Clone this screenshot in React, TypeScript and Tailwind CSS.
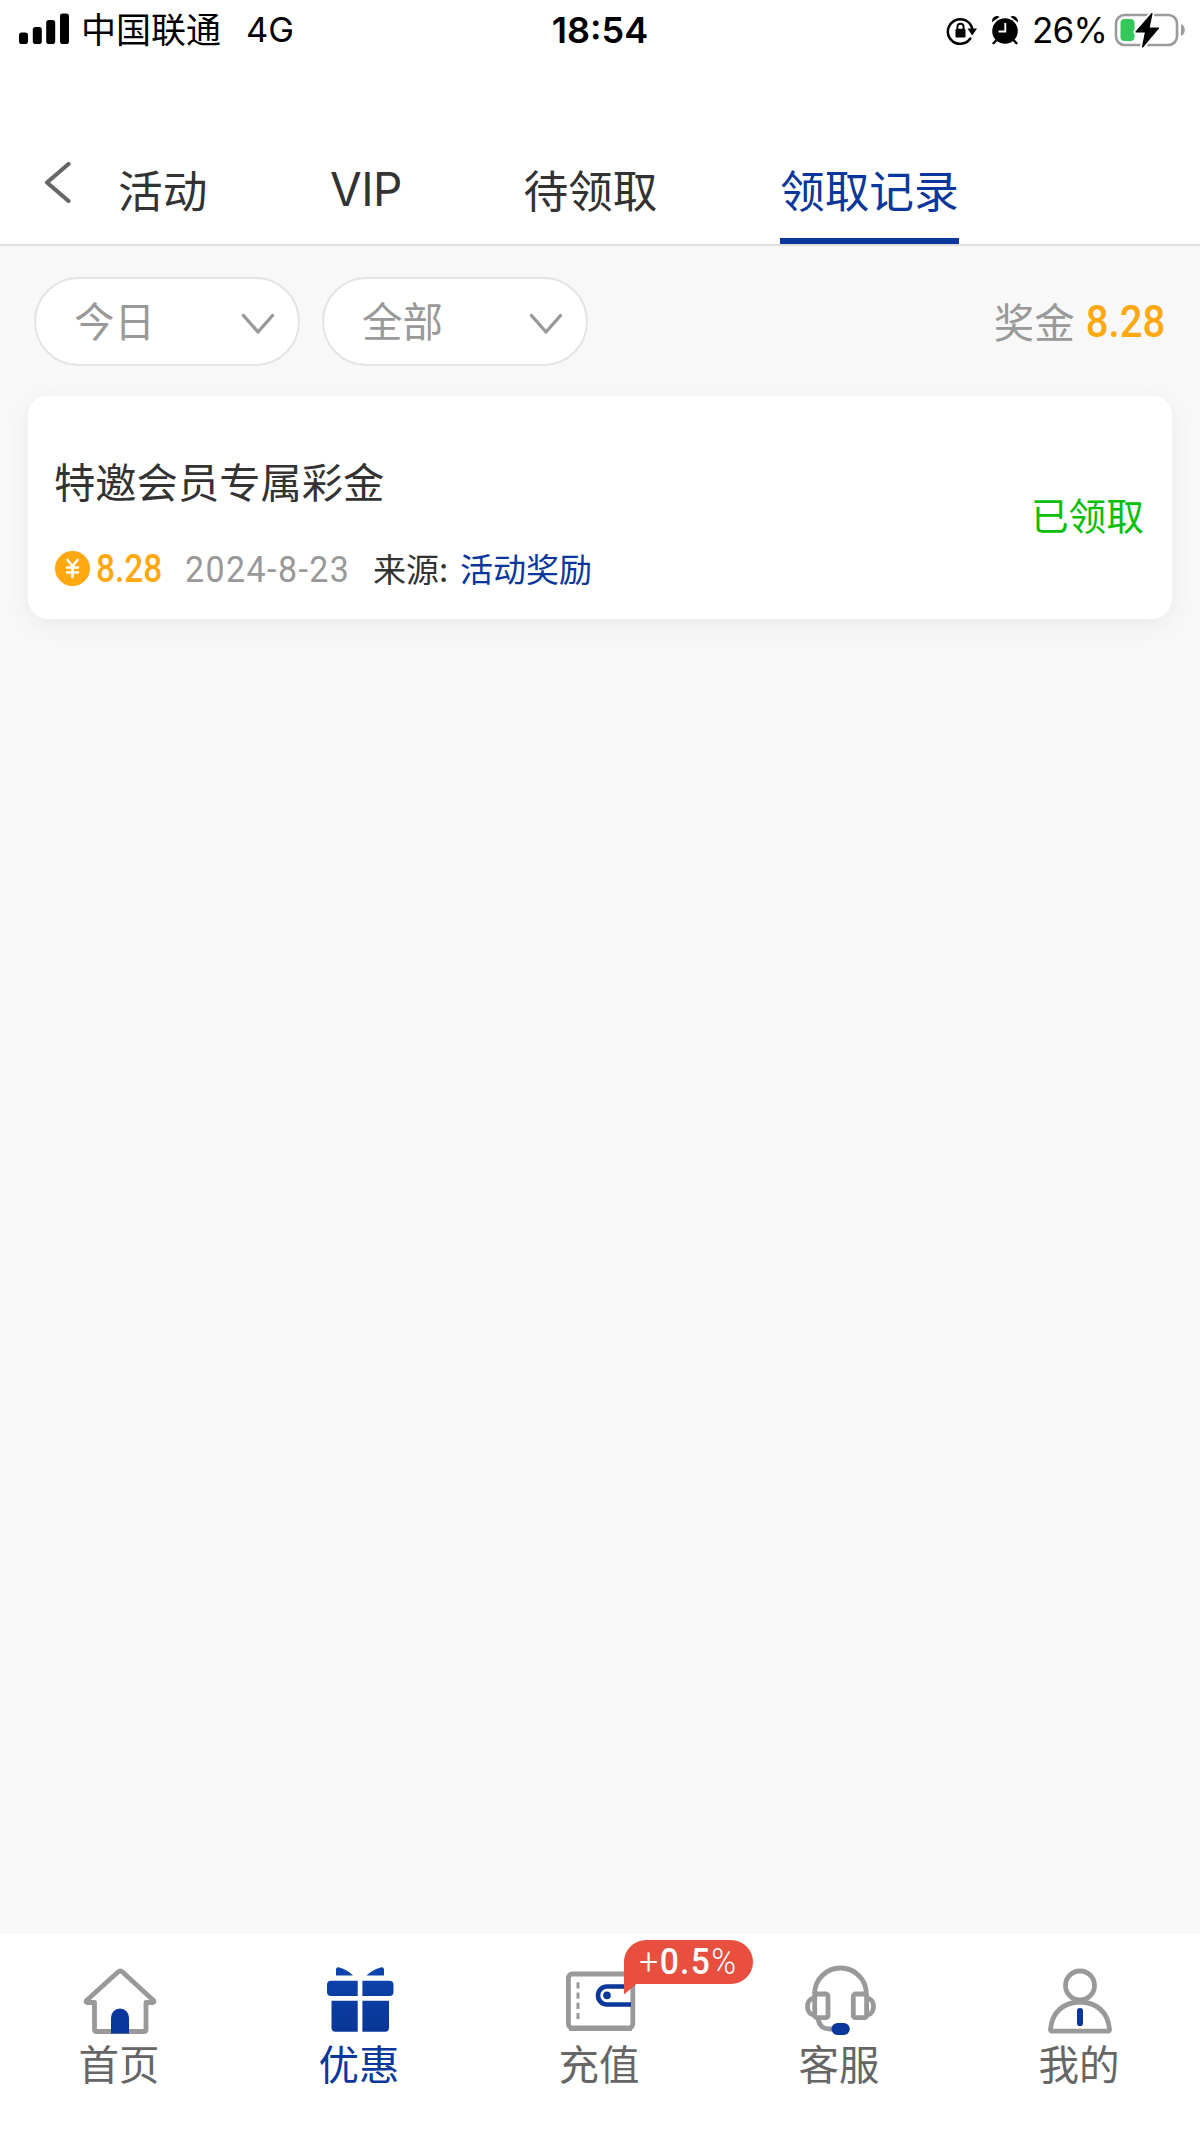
import type { ReactNode } from 'react'

const tabs = [
  { label: '活动', active: false },
  { label: 'VIP', active: false },
  { label: '待领取', active: false },
  { label: '领取记录', active: true },
]

function StatusBar() {
  return (
    <div className="grid h-[60px] grid-cols-3 items-center pt-px font-['Inter','Noto_Sans_CJK_SC',sans-serif] text-[36px] leading-none text-black">
      <div className="flex items-center pl-[19px]">
        <svg width="50" height="32" viewBox="0 0 50 32" className="mt-[-3px] mr-[12px]">
          <rect x="0" y="19.5" width="9" height="11.5" rx="2.8" />
          <rect x="13.8" y="14" width="9" height="17" rx="2.8" />
          <rect x="27.2" y="7" width="9" height="24" rx="2.8" />
          <rect x="41" y="0.5" width="9" height="30.5" rx="2.8" />
        </svg>
        <span className="text-[35px]">中国联通</span>
        <span className="ml-[25px] text-[34.5px]">4G</span>
      </div>
      <div className="-mt-px text-center font-semibold">18:54</div>
      <div className="flex items-center justify-end pr-[14px]">
        <svg width="34" height="32" viewBox="0 0 34 32" className="mr-[12px]" fill="none">
          <path d="M25.3 23.5a12.300 12.300 0 1 1 1.900-9.500" stroke="#000" strokeWidth="2.500" strokeLinecap="round" />
          <path d="M22.500 13.500h9.500l-4.800 7z" fill="#000" />
          <rect x="10.500" y="13.800" width="10" height="8.800" rx="1.400" fill="#000" />
          <path d="M12.400 14.500v-2.600a3.100 3.100 0 0 1 6.200 0v2.600" stroke="#000" strokeWidth="1.900" />
        </svg>
        <svg width="28" height="32" viewBox="0 0 28 32" className="mt-[-2px] mr-[13px]" fill="none">
          <circle cx="14" cy="17" r="12.800" fill="#000" />
          <path d="M1.200 8.200a5 5 0 0 1 7.400-5.400z" fill="#000" />
          <path d="M26.800 8.200a5 5 0 0 0-7.400-5.400z" fill="#000" />
          <path d="M5.500 26l-3 3.200M22.500 26l3 3.200" stroke="#000" strokeWidth="2.400" strokeLinecap="round" />
          <path d="M14.300 9v8.500H7.500" stroke="#fff" strokeWidth="1.900" />
        </svg>
        <span className="text-[35px] tracking-[-0.8px]">26%</span>
        <svg width="72" height="36" viewBox="0 0 72 36" className="mt-[-2px] ml-[7px]" fill="none">
          <rect x="2" y="3" width="61" height="30" rx="8.500" stroke="#9b9b9b" strokeWidth="2.600" />
          <path d="M67 12v12c5-1.600 5-10.400 0-12z" fill="#9b9b9b" />
          <rect x="6.500" y="7" width="14" height="22" rx="4" fill="#34c759" />
          <path d="M38 1.500 22 20h9.500L28.500 35 44.500 16H35z" fill="#fff" stroke="#fff" strokeWidth="5" strokeLinejoin="round" />
          <path d="M38 1.500 22 20h9.500L28.500 35 44.500 16H35z" fill="#000" stroke="#000" strokeWidth="1.200" strokeLinejoin="round" />
        </svg>
      </div>
    </div>
  )
}

function Header() {
  return (
    <div className="flex h-[186px] items-stretch border-b-2 border-[#dfdfdf] pl-[44px]">
      <svg width="28" height="42" viewBox="0 0 28 42" fill="none" className="mt-[101px] mr-[46px]">
        <path d="M24.500 3 3 21.500l21.500 18.500" stroke="#666" strokeWidth="4.200" strokeLinecap="round" strokeLinejoin="round" />
      </svg>
      <div className="flex gap-[122.500px] text-[44.700px] leading-[60px] text-[#333]">
        {tabs.map((tab) => (
          <div
            key={tab.label}
            className={
              tab.active
                ? 'border-b-6 border-[#0a379b] pt-[99px] text-[#0a379b]'
                : tab.label === 'VIP'
                  ? "w-[71px] pt-[99px] font-['Inter',sans-serif] text-[46px] tracking-[-0.5px] whitespace-nowrap"
                  : 'pt-[99px]'
            }
          >
            {tab.label}
          </div>
        ))}
      </div>
    </div>
  )
}

function Select({ label }: { label: string }) {
  return (
    <div className="flex h-[89px] w-[266px] items-center justify-between rounded-full border-2 border-[#e4e4e4] bg-white pr-[23px] pl-[38px] text-[40.5px] text-[#999]">
      <span className="-mt-0.5">{label}</span>
      <svg width="34" height="22" viewBox="0 0 34 22" fill="none" className="mt-[4px]">
        <path d="M2.500 2.500 17 19 31.500 2.500" stroke="#999" strokeWidth="3.400" strokeLinecap="round" strokeLinejoin="round" />
      </svg>
    </div>
  )
}

function RecordCard() {
  return (
    <div className="mx-[28px] mt-[30px] flex h-[223px] items-center justify-between rounded-[20px] bg-white pr-[28px] pl-[26px] shadow-[0_6px_22px_rgba(60,80,90,0.08)]">
      <div className="pt-[26px]">
        <div className="text-[41.3px] leading-[60px] text-[#333]">特邀会员专属彩金</div>
        <div className="mt-[34px] flex h-[48px] items-center text-[33px] leading-[48px] whitespace-nowrap">
          <svg width="35" height="35" viewBox="0 0 35 35" fill="none" className="mt-[2px] ml-px">
            <circle cx="17.500" cy="17.500" r="17.500" fill="#ffa810" />
            <path
              d="M12.500 9l5 6 5-6M12 16.500h11M12 21.500h11M17.500 15.500v10.500"
              stroke="#fff"
              strokeWidth="2.600"
              strokeLinecap="round"
            />
          </svg>
          <div className="mt-[3px] ml-[6px] w-[89px] font-['Roboto',sans-serif] text-[38px] font-medium text-[#ffa810]">
            <span className="inline-block origin-left scale-x-[0.88]">8.28</span>
          </div>
          <div className="mt-[3px] w-[188px] font-['Roboto',sans-serif] text-[37.500px] tracking-[1.600px] text-[#999]">
            <span className="inline-block origin-left scale-x-[0.905]">2024-8-23</span>
          </div>
          <span className="w-[87px] text-[#333]">来源:</span>
          <span className="text-[#0a379b]">活动奖励</span>
        </div>
      </div>
      <div className="mt-[13px] text-[37.700px] text-[#0abf0a]">已领取</div>
    </div>
  )
}

function NavItem({ label, active, children }: { label: string; active?: boolean; children: ReactNode }) {
  return (
    <div className="relative flex flex-1 flex-col items-center pt-[26px]">
      <svg width="80" height="80" viewBox="0 0 80 80" fill="none" stroke="#999" strokeWidth="4.8">
        {children}
      </svg>
      <span
        className={
          active
            ? '-mt-[2px] mr-[2px] text-[40.5px] leading-[50px] text-[#0a379b]'
            : '-mt-[2px] mr-[2px] text-[40.5px] leading-[50px] text-[#666]'
        }
      >
        {label}
      </span>
      {label === '充值' && (
        <div className="absolute top-[6px] left-[144px] flex h-[44px] w-[129px] items-center justify-center rounded-[22px] rounded-bl-none bg-[#e94f3f] font-['Roboto',sans-serif] text-[36.5px] leading-none text-white">
          <svg width="14" height="12" viewBox="0 0 14 12" className="absolute top-[43px] left-0">
            <path d="M0 0h13.500L0 11.500z" fill="#e94f3f" />
          </svg>
          <span className="inline-block scale-x-[0.92] tracking-[1.500px]">
            <span className="font-light">+</span>
            <span className="font-medium">0.5</span>
            <span className="font-light">%</span>
          </span>
        </div>
      )}
    </div>
  )
}

function BottomNav() {
  return (
    <div className="flex h-[200px] bg-white">
      <NavItem label="首页">
        <path
          d="M38 12 6.500 40.500q-1.500 2 1 2H14.500V69.500q0 2 2 2H64q2 0 2-2V42.500h6.500q2.500 0 1-2L42.500 12q-2.250-2-4.500 0z"
          strokeLinejoin="round"
        />
        <path d="M31 73.500V57.500a9 9 0 0 1 18 0v16z" fill="#0a379b" stroke="none" />
      </NavItem>
      <NavItem label="优惠" active>
        <defs>
          <linearGradient id="gift" x1="0" y1="8" x2="0" y2="72" gradientUnits="userSpaceOnUse">
            <stop stopColor="#0d45ad" />
            <stop offset="1" stopColor="#093597" />
          </linearGradient>
        </defs>
        <g fill="url(#gift)" stroke="none">
          <path d="M16 15.500V10q0-3.500 3.500-2.500Q27 9.500 33 15.500z" />
          <path d="M64 15.500V10q0-3.500-3.500-2.500Q53 9.500 46.500 15.500z" />
          <path d="M37.700 20.700V36H11a4 4 0 0 1-4-4v-7.300a4 4 0 0 1 4-4z" />
          <path d="M42.400 20.700V36h27.100a4 4 0 0 0 4-4v-7.300a4 4 0 0 0-4-4z" />
          <path d="M37.700 40.700v31H15.500a4 4 0 0 1-4-4v-27z" />
          <path d="M42.400 40.700v31H65a4 4 0 0 0 4-4v-27z" />
        </g>
      </NavItem>
      <NavItem label="充值">
        <rect x="8.400" y="14" width="64.400" height="54" rx="4" />
        <path d="M9 68.600h63" />
        <path d="M18 22.300v37" strokeWidth="3" strokeDasharray="6.200 4" />
        <path d="M71 26.500H47a9 9 0 0 0 0 18h24" stroke="#0a379b" strokeWidth="4.600" />
        <circle cx="47" cy="35.400" r="3.800" fill="#0a379b" stroke="none" />
      </NavItem>
      <NavItem label="客服">
        <path d="M14.700 36V33.500a25.800 25.500 0 0 1 51.600 0V36" />
        <rect x="14.700" y="34" width="13.300" height="23.700" rx="2.200" />
        <rect x="53.300" y="34" width="13.300" height="23.700" rx="2.200" />
        <path d="M13.500 38c-8 1.500-8 15.500 0 17M67.500 38c8 1.500 8 15.500 0 17" />
        <path d="M18 58.500q1.500 10.500 12 10.500h3" />
        <rect x="31.500" y="63" width="18.300" height="12" rx="6" fill="#0a379b" stroke="none" />
      </NavItem>
      <NavItem label="我的">
        <circle cx="40" cy="25.500" r="14.500" />
        <path d="M12.500 71.200q-2 0-2-2C12 52 24 42 40 42s28 10 29.500 27.200q0 2-2 2z" strokeLinejoin="round" />
        <rect x="37" y="48" width="6" height="18" rx="2.800" fill="#0a379b" stroke="none" />
      </NavItem>
    </div>
  )
}

export default function App() {
  return (
    <div className="flex h-[2134px] w-[1200px] flex-col overflow-hidden bg-[#f8f8f8] font-['Noto_Sans_CJK_SC',sans-serif] font-normal">
      <div className="bg-white">
        <StatusBar />
        <Header />
      </div>
      <div className="flex-1">
        <div className="flex items-center pt-[31px] pr-[35px] pl-[34px]">
          <Select label="今日" />
          <div className="ml-[22px]">
            <Select label="全部" />
          </div>
          <div className="ml-auto flex items-center text-[40.5px] leading-[60px] text-[#999]">
            <span className="-mt-0.5">奖金</span>
            <div className="ml-[2px] pt-px font-['Roboto',sans-serif] text-[44.500px] font-medium text-[#ffa810]">
              <span className="inline-block origin-right scale-x-[0.9]">8.28</span>
            </div>
          </div>
        </div>
        <RecordCard />
      </div>
      <BottomNav />
    </div>
  )
}
